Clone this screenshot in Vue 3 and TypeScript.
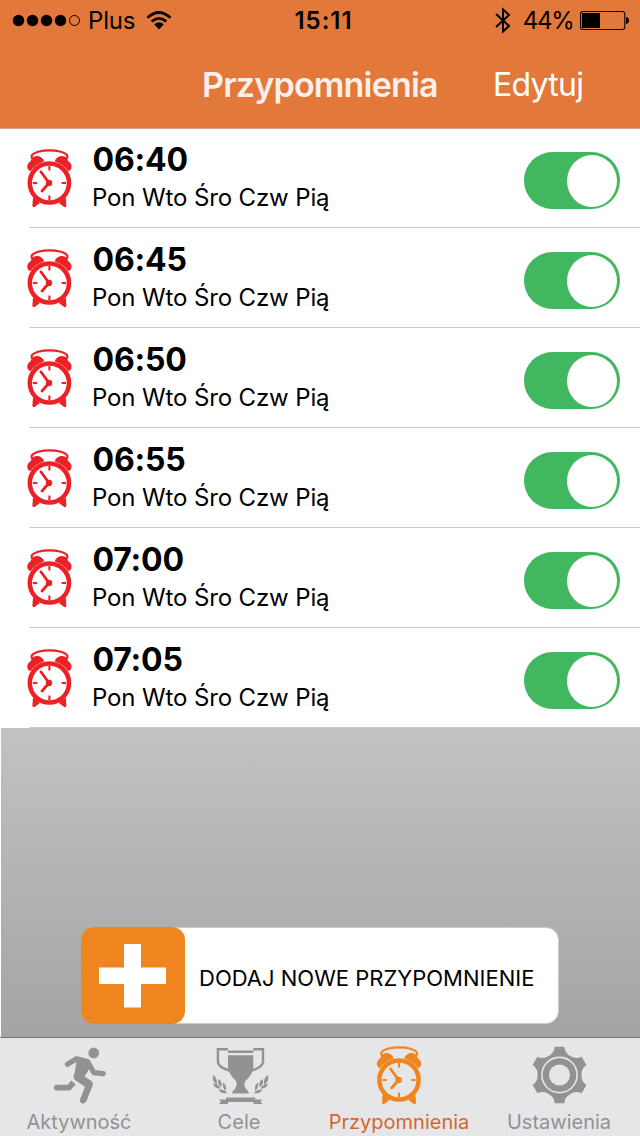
<script setup lang="ts">
interface Reminder { time: string; days: string }

const days = 'Pon Wto Śro Czw Pią'
const reminders: Reminder[] = ['06:40', '06:45', '06:50', '06:55', '07:00', '07:05'].map((time) => ({ time, days }))
const toothAngles = [0, 60, 120, 180, 240, 300]
</script>

<template>
  <div class="screen">
    <svg class="defs" width="0" height="0" aria-hidden="true">
      <symbol id="alarm" viewBox="0 0 48 60">
        <path d="M6.800 11.500Q4.500 8.500 6.500 6.500Q8 5 12 3.800Q23.500 1 35 3.800Q39 5 40.500 6.500Q42.500 8.500 40.200 11.500" fill="none" stroke="currentColor" stroke-width="2.100" />
        <path d="M3.800 23Q.9 21.500 1.300 17.500Q2 14.500 4.700 13L6.500 9.700Q8.300 7.600 11.500 8Q16.500 8.800 18.200 13.200Q9.500 16 4.800 22.800Z" fill="currentColor" />
        <path d="M43 23Q45.900 21.500 45.500 17.500Q44.800 14.500 42.100 13L40.300 9.700Q38.500 7.600 35.300 8Q30.300 8.800 28.600 13.200Q37.300 16 42 22.800Z" fill="currentColor" />
        <circle cx="23.400" cy="35" r="19.600" fill="none" stroke="currentColor" stroke-width="4.500" />
        <path d="M7 49.500L14 55L8.500 59Q6.300 59.500 6.400 57.500ZM39.800 49.500L32.800 55L38.300 59Q40.500 59.500 40.400 57.500Z" fill="currentColor" />
        <path d="M23.400 18V22.500M23.400 47.500V52M6.800 35H11.200M35.600 35H40" stroke="currentColor" stroke-width="2.100" />
        <path d="M14.900 23.800L23 35L16 43" fill="none" stroke="currentColor" stroke-width="2.800" stroke-linecap="round" stroke-linejoin="round" />
        <circle cx="23" cy="35" r="3.200" fill="currentColor" />
      </symbol>
    </svg>

    <header class="header">
      <div class="status">
        <div class="carrier">
          <svg width="68" height="14" viewBox="0 0 68 14">
            <circle v-for="n in 4" :key="n" :cx="n * 14 - 8.500" cy="6.500" r="5.700" />
            <circle cx="61.500" cy="6.500" r="5" fill="none" stroke="#000" />
          </svg>
          <span class="plus">Plus</span>
          <svg class="wifi" width="26" height="20" viewBox="0 0 26 20">
            <path d="M1.500 6.700Q13 -3.700 24.500 6.700M5.600 10.500Q13 4.100 20.400 10.500" fill="none" stroke="#000" stroke-width="2.700" />
            <path d="M8.200 13.200Q13 9.200 17.800 13.200L13 18.500Z" />
          </svg>
        </div>
        <span class="clock">15:11</span>
        <div class="power">
          <svg class="bluetooth" width="18" height="28" viewBox="0 0 18 28">
            <path d="M2 7L15 19L9 24.500V2.500L15 8L2 20" fill="none" stroke="#000" stroke-width="2" />
          </svg>
          <span class="percent">44%</span>
          <svg width="50" height="20" viewBox="0 0 50 20">
            <rect x=".6" y=".5" width="44.200" height="18" rx="2.500" fill="none" stroke="#000" stroke-width="1.100" />
            <path d="M2 2H20V17H2ZM46 6Q49 6.500 49 9.500T46 13Z" />
          </svg>
        </div>
      </div>
      <div class="nav">
        <h1>Przypomnienia</h1>
        <span class="edit">Edytuj</span>
      </div>
    </header>

    <main class="list">
      <div v-for="r in reminders" :key="r.time" class="row">
        <svg class="row-icon" width="48" height="60"><use href="#alarm" /></svg>
        <div class="row-body">
          <div class="texts">
            <div class="time">{{ r.time }}</div>
            <div class="days">{{ r.days }}</div>
          </div>
          <div class="switch"><div class="knob"></div></div>
        </div>
      </div>
    </main>

    <section class="space">
      <div class="add">
        <div class="add-icon">
          <svg width="68" height="64" viewBox="0 0 68 64"><path d="M25 0H42V23.500H67V40H42V63.500H25V40H0V23.500H25Z" fill="#fff" /></svg>
        </div>
        <span class="add-text">DODAJ NOWE PRZYPOMNIENIE</span>
      </div>
    </section>

    <nav class="tabs">
      <div class="tab">
        <svg width="60" height="64" viewBox="0 0 60 64">
          <circle cx="43.700" cy="15" r="5.400" fill="currentColor" />
          <path d="M17.500 26.300L26.500 20.700L37.500 23.500L44 34.700L53.200 35.600" fill="none" stroke="currentColor" stroke-width="5.200" stroke-linecap="round" stroke-linejoin="round" />
          <path d="M27 20L40 22L40.500 29L34.500 38.500L41.500 43Q43.500 44.500 42.700 47.500L36.500 63Q34.500 66.500 31.500 65.200Q29.500 64 30.200 61L35 48.800L25.500 42.500Q22 39.500 24.500 35.500Z" fill="currentColor" />
          <path d="M6.800 49.600H19L23.500 44.500" fill="none" stroke="currentColor" stroke-width="5.800" stroke-linejoin="round" />
          <circle cx="6.800" cy="49.600" r="2.900" fill="currentColor" />
        </svg>
        <span>Aktywność</span>
      </div>
      <div class="tab">
        <svg width="60" height="64" viewBox="0 0 60 64">
          <path d="M18 11.300H7.900V24Q8.500 29.500 19.500 32.500M43.300 11.300H53V24Q52.300 29.500 41.500 32.500" fill="none" stroke="currentColor" stroke-width="2.400" />
          <path d="M18 12.500H43.300V15H18ZM18 17.300H43.300V30Q42.500 36.500 36 42.500Q33 46 35.500 50L38.700 54V55.500H22.300V54L25.500 50Q28 46 25.500 42.500Q19 36.500 18 30Z" fill="currentColor" />
          <path d="M16 59.500H45.300V61.500H52.500L50.500 63.700L52.500 66H43.500V64H18V66H9L11 63.700L9 61.500H16Z" fill="currentColor" />
          <path id="laurel" d="M3.400 37Q1 43 7 46.500Q7.500 40 3.400 37M8.500 41Q6.500 46 11.500 49Q12.500 43.500 8.500 41M3 45.500Q4.500 51 10.500 50.500Q8.500 46 3 45.500M13 44.500Q12 50 15.500 53Q17.500 47.500 13 44.500M8.500 51.500Q11.500 56.500 17 55Q14.500 51 8.500 51.500" fill="currentColor" />
          <use href="#laurel" transform="translate(61 0) scale(-1 1)" />
        </svg>
        <span>Cele</span>
      </div>
      <div class="tab active">
        <svg width="60" height="64" viewBox="0 0 60 64"><use href="#alarm" x="5.600" y="7" width="48" height="60" /></svg>
        <span>Przypomnienia</span>
      </div>
      <div class="tab">
        <svg width="60" height="64" viewBox="0 0 60 64">
          <g transform="translate(29.500 37)">
            <circle r="21.300" fill="currentColor" />
            <path v-for="a in toothAngles" :key="a" :transform="`rotate(${a})`" d="M-4.800 -28.300H4.800Q5.500 -21.500 11 -19L0 0L-11 -19Q-5.500 -21.500 -4.800 -28.300Z" fill="currentColor" />
            <circle r="17.600" fill="none" stroke="#e6e6e8" stroke-width="1.600" />
            <circle r="10.500" fill="#e6e6e8" />
          </g>
        </svg>
        <span>Ustawienia</span>
      </div>
    </nav>
  </div>
</template>

<style>
body { background: #fff; }
</style>

<style scoped>
.screen { width: 640px; height: 1136px; display: flex; flex-direction: column; overflow: hidden; font-family: Inter, "Liberation Sans", sans-serif; color: #000; background: #fff; }
.defs { display: block; }
svg { display: block; overflow: visible; flex: none; }
.header { height: 129px; margin-bottom: -1px; background: #e27839; border-bottom: 1px solid #d5a88d; box-sizing: border-box; flex: none; }
.status { height: 41px; display: grid; grid-template-columns: 1fr 1fr 1fr; align-items: center; font-size: 24px; line-height: 41px; }
.carrier { display: flex; align-items: center; padding-left: 13px; }
.plus { margin-left: 7px; letter-spacing: -0.2px; }
.wifi { margin-left: 11px; }
.clock { text-align: center; font-weight: 600; letter-spacing: 1px; padding-left: 7px; }
.power { display: flex; align-items: center; justify-content: flex-end; padding-right: 10px; }
.bluetooth { margin-right: 11px; }
.percent { margin-right: 6.5px; letter-spacing: -1.3px; }
.nav { height: 87px; display: grid; grid-template-columns: 202px 1fr 147px; align-items: center; color: #fff; }
h1 { grid-column: 2; margin: 0; font-size: 34px; font-weight: 600; line-height: 88px; white-space: nowrap; color: #fcefeb; letter-spacing: -0.8px; }
.edit { font-size: 32px; font-weight: 400; line-height: 88px; white-space: nowrap; letter-spacing: -0.7px; }
.list { height: 600px; flex: none; }
.row { height: 100px; display: flex; padding-left: 26px; box-sizing: border-box; }
.row-icon { color: #ed2026; margin-top: 20px; margin-right: -44px; }
.row-body { flex: 1; border-bottom: 1px solid #c8c8ca; display: flex; justify-content: space-between; padding: 0 20.5px 0 62px; }
.texts { white-space: nowrap; }
.time { font-size: 32px; line-height: 40px; font-weight: 700; padding: 12px 0 0 0.5px; letter-spacing: -0.2px; }
.days { font-size: 24px; line-height: 38px; letter-spacing: -0.13px; margin-top: -1px; }
.switch { width: 96px; height: 57px; margin-top: 24px; border-radius: 29px; background: #41b75f; display: flex; justify-content: flex-end; align-items: center; padding-right: 3px; box-sizing: border-box; }
.knob { width: 50px; height: 52px; border-radius: 50%; background: #fff; }
.space { height: 309px; margin-left: 1px; background: linear-gradient(#c1c2c4, #a3a4a6); display: flex; justify-content: flex-start; align-items: flex-start; flex: none; box-sizing: border-box; padding: 199px 0 0 80px; }
.add { width: 478px; height: 97px; box-sizing: border-box; background: #fff; border-radius: 13px; border: 1px solid #ccc; display: flex; align-items: center; }
.add-icon { width: 104px; height: 97px; margin-left: -1px; border-radius: 13px; background: #ef851f; display: flex; align-items: center; justify-content: center; }
.add-text { margin-left: 14px; font-size: 22px; white-space: nowrap; padding-top: 4px; }
.tabs { flex: 1; display: grid; grid-template-columns: repeat(4, 160px); border-top: 1px solid #77787b; background: #e6e6e8; color: #929292; }
.tab { display: flex; flex-direction: column; align-items: center; font-size: 20px; }
.tab span { line-height: 26px; margin: 7px 2px 0 0; white-space: nowrap; }
.tab.active { color: #ef851f; }
.active span { color: #d3672c; }
</style>
